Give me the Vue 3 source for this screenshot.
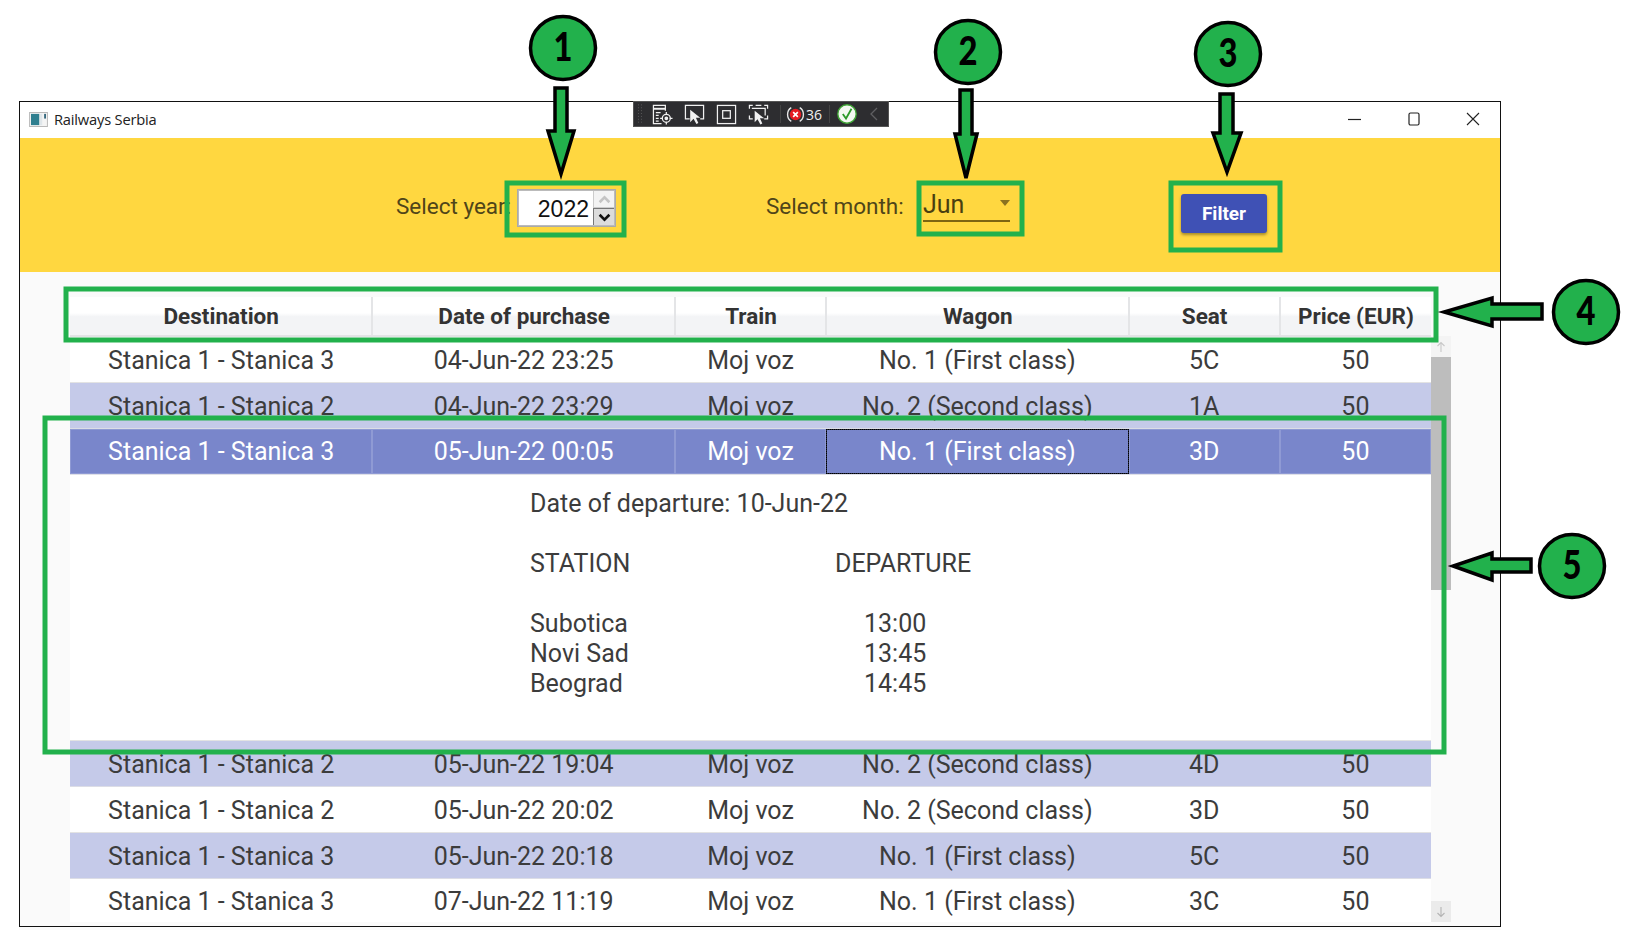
<template>
  <div class="page">
    <div class="window">
      <!-- title bar -->
      <div class="titlebar">
        <svg class="app-icon" viewBox="0 0 20 16">
          <rect x="0.5" y="0.5" width="19" height="15" fill="#f4f4f4" stroke="#b5b5b5"/>
          <rect x="2" y="2" width="9" height="12" fill="#2f7f8f"/>
          <rect x="11" y="2" width="3" height="12" fill="#dfe6ea"/>
          <rect x="16" y="2" width="2" height="5" fill="#37697f"/>
        </svg>
        <span class="app-title">Railways Serbia</span>
        <div class="win-controls">
          <svg viewBox="0 0 14 14"><line x1="0" y1="7.5" x2="13" y2="7.5" stroke="#222" stroke-width="1.2"/></svg>
          <svg viewBox="0 0 14 14"><rect x="2" y="1" width="10" height="12" rx="1.5" fill="none" stroke="#222" stroke-width="1.2"/></svg>
          <svg viewBox="0 0 14 14"><path d="M1 1 L13 13 M13 1 L1 13" stroke="#222" stroke-width="1.1" fill="none"/></svg>
        </div>
      </div>

      <!-- filter bar -->
      <div class="filterbar">
        <span class="lbl lbl-year">Select year:</span>
        <div class="spinner">
          <span class="spin-value">2022</span>
          <div class="spin-btns">
            <div class="spin-up"><svg viewBox="0 0 12 8"><path d="M1.5 6.5 L6 2 L10.5 6.5" fill="none" stroke="#c4c4c4" stroke-width="2.4"/></svg></div>
            <div class="spin-down"><svg viewBox="0 0 12 8"><path d="M1.5 1.5 L6 6 L10.5 1.5" fill="none" stroke="#111" stroke-width="2.4"/></svg></div>
          </div>
        </div>
        <span class="lbl lbl-month">Select month:</span>
        <div class="combo">
          <span>Jun</span>
          <i class="caret"></i>
        </div>
        <button class="filter-btn">Filter</button>
      </div>

      <!-- grid -->
      <div class="content">
        <div class="table">
          <div class="row head">
            <div v-for="c in columns" :key="c" class="cell">{{ c }}</div>
          </div>
          <template v-for="(r, i) in rows" :key="i">
            <div class="row" :class="{ alt: r.alt, selected: r.selected, last: i === rows.length - 1 }">
              <div v-for="(v, j) in r.cells" :key="j" class="cell" :class="{ focus: r.selected && j === 3 }">{{ v }}</div>
            </div>
            <div v-if="r.selected" class="details">
              <div class="det-line">Date of departure: 10-Jun-22</div>
              <div class="det-line det-gap">
                <span class="det-a">STATION</span><span>DEPARTURE</span>
              </div>
              <div v-for="s in stations" :key="s.name" class="det-line">
                <span class="det-a">{{ s.name }}</span><span class="det-time">{{ s.time }}</span>
              </div>
            </div>
          </template>
        </div>
        <div class="scrollbar">
          <div class="sb-btn">
            <svg viewBox="0 0 12 12"><path d="M6 11 V2 M2.5 5 L6 1.5 L9.5 5" fill="none" stroke="#c8c8c8" stroke-width="1.1"/></svg>
          </div>
          <div class="sb-thumb"></div>
          <div class="sb-rest"></div>
          <div class="sb-btn sb-btn-down">
            <svg viewBox="0 0 12 12"><path d="M6 1 V10 M2.5 7 L6 10.5 L9.5 7" fill="none" stroke="#b4b4b4" stroke-width="1.1"/></svg>
          </div>
        </div>
      </div>
    </div>

    <!-- visual studio debug toolbar laying over the title bar -->
    <div class="vs-toolbar">
      <svg class="grip" viewBox="0 0 6 25"><path d="M1 3h1M4 3h1M1 6h1M4 6h1M1 9h1M4 9h1M1 12h1M4 12h1M1 15h1M4 15h1M1 18h1M4 18h1M1 21h1M4 21h1" stroke="#5c5c5c" stroke-width="1"/></svg>
      <svg class="vs-ic" viewBox="0 0 22 22" fill="none" stroke="#f1f1f1" stroke-width="1.3">
        <path d="M10 20.5 H1.5 V1.5 H14 V7"/><line x1="2" y1="5" x2="14" y2="5" stroke-width="2"/>
        <path d="M4 9h5M4 12h3M4 15h3M4 18h3"/>
        <circle cx="15" cy="15" r="4.2"/><circle cx="15" cy="15" r="1.3" fill="#f1f1f1"/>
        <path d="M15 8.5v3M15 18.5v3M8.5 15h3M18.5 15h3"/>
      </svg>
      <svg class="vs-ic" viewBox="0 0 22 22" fill="none" stroke="#f1f1f1" stroke-width="1.3">
        <path d="M6 15.5 H1.5 V1.5 H20.5 V15.5 H17"/>
        <path d="M6.5 6 L6.5 19 L10 15.5 L13 21 L15 20 L12.5 14.5 L17 14.5 Z" fill="#f1f1f1" stroke="none"/>
      </svg>
      <svg class="vs-ic" viewBox="0 0 22 22" fill="none" stroke="#f1f1f1" stroke-width="1.3">
        <rect x="1.5" y="1.5" width="19" height="19"/><rect x="7" y="7" width="8" height="8"/>
      </svg>
      <svg class="vs-ic" viewBox="0 0 22 22" fill="none" stroke="#f1f1f1" stroke-width="1.3">
        <path d="M5 1.5H1.5V5M17 1.5H20.5V5M1.5 12V15.5H5M20.5 12V15.5H17M8 1.5H14"/>
        <path d="M4 4.5H18V12" />
        <path d="M7 7 L7 19 L10 16 L13 21.5 L15 20.5 L12.5 15 L17 15 Z" fill="#f1f1f1" stroke="none"/>
      </svg>
      <i class="vs-sep"></i>
      <svg class="vs-bug" viewBox="0 0 18 18" fill="none">
        <path d="M5 2.5 C2.5 4 1.5 6 1.5 9 C1.5 12 2.5 14 5 15.5 M13 2.5 C15.5 4 16.5 6 16.5 9 C16.5 12 15.5 14 13 15.5" stroke="#e6e6e6" stroke-width="1.3"/>
        <circle cx="9" cy="9" r="5.4" fill="#e51c23"/>
        <path d="M6.8 6.8 L11.2 11.2 M11.2 6.8 L6.8 11.2" stroke="#fff" stroke-width="1.6"/>
      </svg>
      <span class="vs-count">36</span>
      <i class="vs-sep vs-sep2"></i>
      <svg class="vs-check" viewBox="0 0 20 20">
        <circle cx="10" cy="10" r="9.2" fill="#f4f8f2" stroke="#3fa535" stroke-width="1.4"/>
        <path d="M5.8 10 L9 14.5 L14.5 4.8" fill="none" stroke="#2c9a2a" stroke-width="1.8"/>
      </svg>
      <svg class="vs-chev" viewBox="0 0 8 14"><path d="M7 1 L1 7 L7 13" fill="none" stroke="#5f5f62" stroke-width="1.3"/></svg>
    </div>

    <!-- green annotations drawn on top of the screenshot -->
    <svg class="annot" viewBox="0 0 1634 940">
      <g fill="none" stroke="#22b14c" stroke-width="5">
        <rect x="507" y="183" width="117" height="52"/>
        <rect x="919" y="183" width="103" height="51"/>
        <rect x="1171" y="183" width="109" height="67"/>
        <rect x="66" y="289" width="1370" height="51"/>
        <rect x="45" y="418" width="1399" height="334"/>
      </g>
      <g fill="#22b14c" stroke="#000" stroke-width="3.5" stroke-linejoin="miter">
        <polygon v-for="a in arrows" :key="a" :points="a"/>
        <ellipse v-for="b in badges" :key="b.n" :cx="b.x" :cy="b.y" rx="32.5" ry="31.5"/>
      </g>
      <text v-for="b in badges" :key="'t' + b.n" class="badge-num" :x="b.x" :y="b.y + 13" textLength="19" lengthAdjust="spacingAndGlyphs">{{ b.n }}</text>
    </svg>
  </div>
</template>

<script setup>
const columns = ['Destination', 'Date of purchase', 'Train', 'Wagon', 'Seat', 'Price (EUR)']

const ONE = 'No. 1 (First class)'
const TWO = 'No. 2 (Second class)'
const S3 = 'Stanica 1 - Stanica 3'
const S2 = 'Stanica 1 - Stanica 2'

const rows = [
  { cells: [S3, '04-Jun-22 23:25', 'Moj voz', ONE, '5C', '50'] },
  { alt: true, cells: [S2, '04-Jun-22 23:29', 'Moj voz', TWO, '1A', '50'] },
  { selected: true, cells: [S3, '05-Jun-22 00:05', 'Moj voz', ONE, '3D', '50'] },
  { alt: true, cells: [S2, '05-Jun-22 19:04', 'Moj voz', TWO, '4D', '50'] },
  { cells: [S2, '05-Jun-22 20:02', 'Moj voz', TWO, '3D', '50'] },
  { alt: true, cells: [S3, '05-Jun-22 20:18', 'Moj voz', ONE, '5C', '50'] },
  { cells: [S3, '07-Jun-22 11:19', 'Moj voz', ONE, '3C', '50'] },
]

const stations = [
  { name: 'Subotica', time: '13:00' },
  { name: 'Novi Sad', time: '13:45' },
  { name: 'Beograd', time: '14:45' },
]

const badges = [
  { n: 1, x: 563, y: 48 },
  { n: 2, x: 968, y: 52 },
  { n: 3, x: 1228, y: 54 },
  { n: 4, x: 1586, y: 312 },
  { n: 5, x: 1572, y: 566 },
]

const arrows = [
  '555,88 567,88 567,131 574,131 561,174 548,131 555,131',
  '960,90 972,90 972,134 977,134 966,178 955,134 960,134',
  '1220,94 1233,94 1233,133 1241,133 1227,172 1213,133 1220,133',
  '1542,304 1492,304 1492,298 1444,312 1492,326 1492,319 1542,319',
  '1531,559 1492,559 1492,553 1453,566 1492,580 1492,572 1531,572',
]
</script>

<style scoped>
.page {
  position: relative;
  width: 1634px;
  height: 940px;
  padding: 101px 0 0 19px;
  box-sizing: border-box;
  background: #fff;
  overflow: hidden;
  font-family: Roboto, sans-serif;
}

.window {
  width: 1482px;
  height: 826px;
  box-sizing: border-box;
  border: 1px solid #111;
  background: #fafafa;
  display: flex;
  flex-direction: column;
  overflow: hidden;
  box-shadow: 0 3px 0 #fafafa;
}

.titlebar {
  height: 36px;
  flex: none;
  background: #fff;
  display: flex;
  align-items: center;
  padding: 0 0 2px 9px;
  box-sizing: border-box;
}
.app-icon { width: 19px; height: 15px; margin-right: 6px; }
.app-title { font-family: "Open Sans", sans-serif; font-size: 14.7px; color: #222; letter-spacing: -0.2px; }
.win-controls { margin-left: auto; display: flex; gap: 45px; padding-right: 20px; }
.win-controls svg { width: 14px; height: 14px; }

.filterbar {
  height: 134px;
  flex: none;
  background: #ffd740;
  display: flex;
  align-items: flex-start;
  padding-left: 376px;
  box-sizing: border-box;
}
.lbl { font-size: 22.5px; color: #4f4519; margin-top: 54px; line-height: 28px; white-space: nowrap; }
.lbl-year { width: 121px; }
.lbl-month { margin-left: 150px; width: 157px; }

.spinner {
  margin-top: 51px;
  width: 99px;
  height: 38px;
  box-sizing: border-box;
  background: #fff;
  border: 1px solid #aaa;
  display: flex;
  align-items: center;
  justify-content: flex-end;
  outline: 1px solid #bbb;
  outline-offset: -2px;
}
.spin-value { font-family: "Liberation Sans", sans-serif; font-size: 23px; color: #111; margin-right: 4px; padding-top: 2px; }
.spin-btns { width: 22px; height: 36px; display: flex; flex-direction: column; }
.spin-up, .spin-down {
  flex: 1;
  box-sizing: border-box;
  border: 1px solid #ccc;
  display: flex;
  align-items: center;
  justify-content: center;
  background: #f3f3f3;
}
.spin-down { background: #dcdcdc; border-color: #777; }
.spin-btns svg { width: 13px; height: 9px; }

.combo {
  margin-top: 48px;
  width: 87px;
  height: 36px;
  box-sizing: border-box;
  border-bottom: 2px solid #7d6512;
  font-size: 25px;
  color: #4a3f10;
  line-height: 38px;
  position: relative;
}
.caret {
  position: absolute;
  right: 0;
  top: 14px;
  border: 5px solid transparent;
  border-top: 6px solid #8a7220;
  border-bottom: 0;
}

.filter-btn {
  margin: 56px 0 0 171px;
  width: 86px;
  height: 39px;
  border: none;
  border-radius: 3px;
  background: #3f51b5;
  color: #fff;
  font-family: Roboto, sans-serif;
  font-size: 19px;
  font-weight: 700;
  box-shadow: 0 2px 3px rgba(0, 0, 0, 0.35);
}

.content {
  flex: 1;
  min-height: 0;
  display: flex;
  align-items: flex-start;
  padding: 25px 0 0 50px;
  overflow: hidden;
}

.table { width: 1361px; flex: none; background: #fff; }

.row {
  display: grid;
  grid-template-columns: 2fr 2fr 1fr 2fr 1fr 1fr;
  height: 46px;
  box-sizing: border-box;
  border-bottom: 1px solid #e3e3e3;
  background: #fff;
  color: #3c3c3c;
  font-size: 25px;
}
.row.alt { background: #c5cae9; border-bottom-color: #dcdde6; }
.row.selected { background: #7986cb; color: #fff; border-bottom-color: #dfe0e8; }
.row.last { height: 43px; border-bottom: none; }

.cell {
  display: flex;
  align-items: center;
  justify-content: center;
  box-sizing: border-box;
  white-space: nowrap;
  padding-top: 1px;
}
.row.selected .cell { border: 1px solid #8f9ad4; padding-top: 0; }
.row.selected .cell.focus { border: 1px dotted #000; outline: 1px solid rgba(0, 0, 0, 0.7); outline-offset: -1px; }

.row.head {
  height: 40px;
  border-bottom: 2px solid #e2e3e5;
  background: linear-gradient(#fff 0, #fff 42%, #f3f4f6 52%, #f3f4f6 100%);
  color: #333;
  font-size: 22.5px;
  font-weight: 700;
}
.row.head .cell { padding-top: 0; }
.row.head .cell + .cell { border-left: 2px solid #e4e5e7; margin-left: -1px; }

.details {
  height: 266px;
  background: #fff;
  padding: 13.5px 0 0 460px;
  box-sizing: border-box;
  color: #3c3c3c;
  font-size: 25px;
  line-height: 30px;
  border-bottom: 1px solid #e3e3e3;
}
.det-line { height: 30px; white-space: nowrap; }
.det-gap { margin: 30px 0; }
.det-a { display: inline-block; width: 305px; }
.det-time { margin-left: 29px; }

.scrollbar {
  width: 20px;
  height: 586px;
  margin-top: 39px;
  flex: none;
  display: flex;
  flex-direction: column;
}
.sb-btn {
  height: 21px;
  flex: none;
  display: flex;
  align-items: center;
  justify-content: center;
  background: #f4f4f4;
}
.sb-btn svg { width: 12px; height: 12px; }
.sb-btn-down { background: #ebebeb; }
.sb-thumb { height: 233px; flex: none; background: #bdbdbd; }
.sb-rest { flex: 1; }

.vs-toolbar {
  position: absolute;
  left: 633px;
  top: 101px;
  width: 256px;
  height: 26px;
  box-sizing: border-box;
  background: #2d2d30;
  border: 1px solid #555;
  display: flex;
  align-items: center;
  color: #f1f1f1;
}
.grip { width: 6px; height: 24px; margin-left: 3px; margin-right: 9px; flex: none; }
.vs-ic { width: 21px; height: 21px; margin-right: 11px; flex: none; }
.vs-sep { width: 1px; height: 18px; background: #444; margin-right: 5px; flex: none; }
.vs-bug { width: 19px; height: 19px; flex: none; }
.vs-count { font-family: "Open Sans", sans-serif; font-size: 14px; margin-left: 1px; width: 20px; flex: none; }
.vs-sep2 { margin-left: 3px; margin-right: 7px; }
.vs-check { width: 20px; height: 20px; flex: none; }
.vs-chev { width: 8px; height: 14px; margin-left: 13px; flex: none; }

.annot {
  position: absolute;
  left: 0;
  top: 0;
  width: 1634px;
  height: 940px;
  pointer-events: none;
}
.badge-num {
  font-family: Lato, sans-serif;
  font-weight: 900;
  font-size: 39px;
  text-anchor: middle;
  fill: #000;
}
</style>
